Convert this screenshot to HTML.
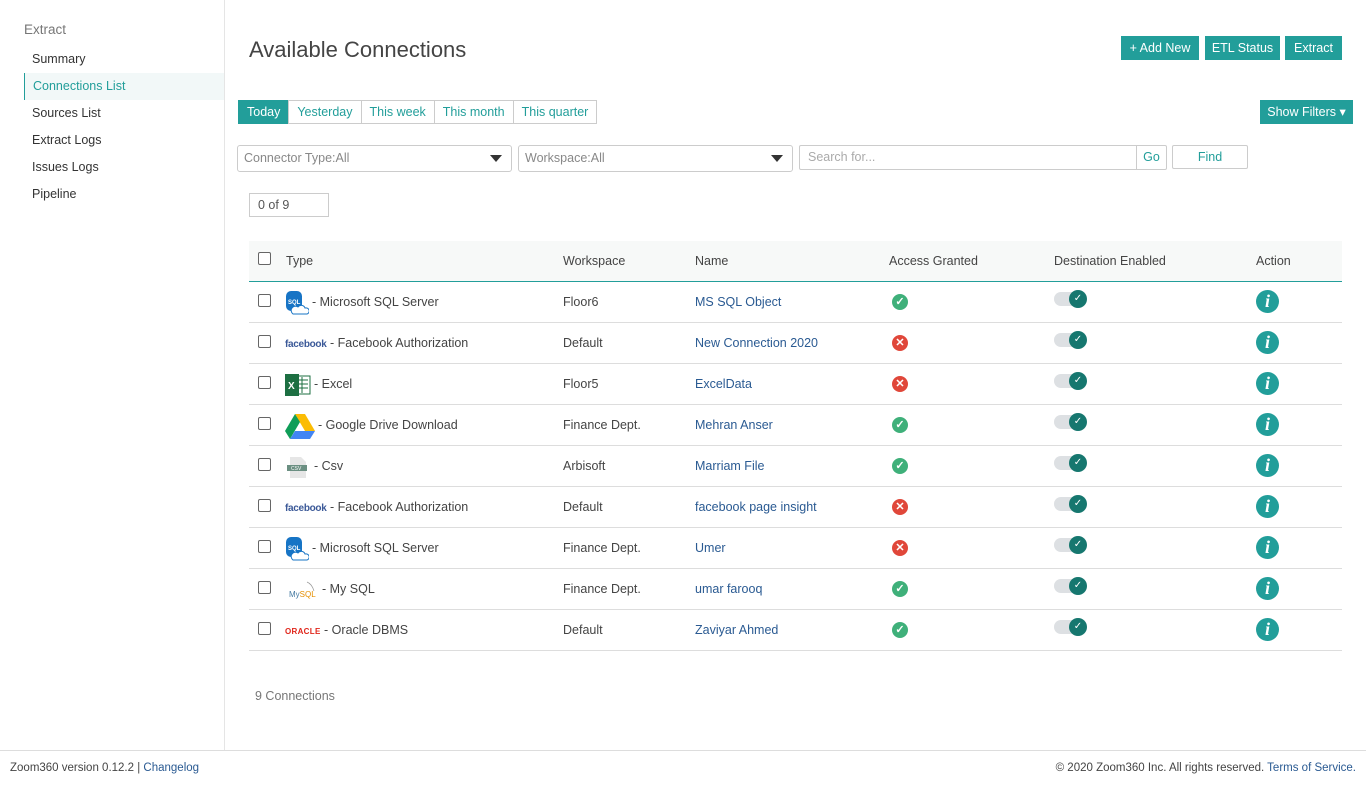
<!DOCTYPE html>
<html><head><meta charset="utf-8"><style>
*{box-sizing:border-box;margin:0;padding:0}
body{width:1366px;height:786px;font-family:"Liberation Sans",sans-serif;font-size:12.5px;color:#444;background:#fff;position:relative;overflow:hidden}
.abs{position:absolute}
.side{left:0;top:0;width:225px;height:750px;border-right:1px solid #e5e5e5}
.side .h{position:absolute;left:24px;top:22px;font-size:13.5px;color:#777}
.side .it{position:absolute;left:24px;width:200px;height:27px;line-height:27px;padding-left:8px;color:#333}
.side .act{background:#f2f8f8;border-left:1px solid #229e9a;color:#229e9a}
h1{position:absolute;left:249px;top:37px;font-size:22px;font-weight:normal;color:#444}
.btn{position:absolute;background:#229e9a;color:#fff;height:24px;line-height:24px;text-align:center;font-size:12.5px}
.tabs{position:absolute;left:238px;top:100px;display:flex}
.tabs div{height:24px;line-height:22px;border:1px solid #ccc;margin-right:-1px;padding:0 8px;color:#229e9a;background:#fff}
.tabs .on{background:#229e9a;color:#fff;border-color:#229e9a}
.sel{position:absolute;top:145px;height:27px;border:1px solid #ccc;border-radius:3px;line-height:25px;padding-left:6px;color:#888}
.sel:after{content:"";position:absolute;right:9px;top:9px;border:6px solid transparent;border-top:7px solid #333}
.th{left:249px;top:241px;width:1093px;height:41px;background:#f7f9f8;border-bottom:1px solid #229e9a}
.row{left:249px;width:1093px;height:41px;border-bottom:1px solid #ddd}
.c{position:absolute;top:0;line-height:40px;white-space:nowrap}
.cb{position:absolute;left:9px;top:12px;width:13px;height:13px;border:1px solid #666;border-radius:2px;background:#fff}
.lnk{color:#2a5a92}
.ok,.no{position:absolute;left:643px;top:12px;width:16px;height:16px;border-radius:50%;color:#fff;font-size:11px;line-height:16px;text-align:center;font-weight:bold}
.ok{background:#3fb07a}.no{background:#e0473a}
.tg{position:absolute;left:805px;top:10px;width:32px;height:14px;border-radius:7px;background:#dde0e3}
.tg:after{content:"✓";position:absolute;right:-1px;top:-2px;width:18px;height:18px;border-radius:50%;background:#16776f;color:#fff;font-size:10px;line-height:18px;text-align:center}
.inf{position:absolute;left:1007px;top:8px;width:23px;height:23px;border-radius:50%;background:#229e9a;color:#fff;font-family:"Liberation Serif",serif;font-style:italic;font-weight:bold;font-size:18px;line-height:23px;text-align:center}
.ic{display:inline-block;vertical-align:middle;margin-right:3px}
.fb{color:#3b5998;font-weight:bold;font-size:10px;letter-spacing:-.3px}
.or{color:#e0261b;font-weight:bold;font-size:8px;letter-spacing:.3px}
</style></head><body>
<div class="abs side">
<div class="h">Extract</div>
<div class="it" style="top:46px">Summary</div>
<div class="it act" style="top:73px">Connections List</div>
<div class="it" style="top:100px">Sources List</div>
<div class="it" style="top:127px">Extract Logs</div>
<div class="it" style="top:154px">Issues Logs</div>
<div class="it" style="top:181px">Pipeline</div>
</div>
<h1>Available Connections</h1>
<div class="btn" style="left:1121px;top:36px;width:78px">+ Add New</div>
<div class="btn" style="left:1205px;top:36px;width:75px">ETL Status</div>
<div class="btn" style="left:1285px;top:36px;width:57px">Extract</div>
<div class="btn" style="left:1260px;top:100px;width:93px">Show Filters ▾</div>
<div class="tabs"><div class="on">Today</div><div>Yesterday</div><div>This week</div><div>This month</div><div>This quarter</div></div>
<div class="sel" style="left:237px;width:275px">Connector Type:All</div>
<div class="sel" style="left:518px;width:275px">Workspace:All</div>
<div class="abs" style="left:799px;top:145px;width:368px;height:25px;border:1px solid #ccc;border-radius:2px;color:#aaa;line-height:23px;padding-left:8px">Search for...<span style="position:absolute;right:0;top:0;width:30px;height:23px;border-left:1px solid #ccc;color:#229e9a;text-align:center">Go</span></div>
<div class="abs" style="left:1172px;top:145px;width:76px;height:24px;border:1px solid #ccc;border-radius:2px;color:#229e9a;text-align:center;line-height:22px">Find</div>
<div class="abs" style="left:249px;top:193px;width:80px;height:24px;border:1px solid #ccc;line-height:22px;padding-left:8px;color:#555">0 of 9</div>
<div class="abs th">
<div class="cb" style="top:11px"></div>
<div class="c" style="left:37px">Type</div><div class="c" style="left:314px">Workspace</div><div class="c" style="left:446px">Name</div><div class="c" style="left:640px">Access Granted</div><div class="c" style="left:805px">Destination Enabled</div><div class="c" style="left:1007px">Action</div>
</div>

<div class="abs row" style="top:282px"><div class="cb"></div><div class="c" style="left:36px"><svg class="ic" width="24" height="26"><rect x="1" y="1" width="16" height="20" rx="5" fill="#1774c5"/><text x="3" y="14" font-size="6" fill="#fff" font-weight="bold">SQL</text><path d="M8 24h14a3 3 0 0 0-2-6 4 4 0 0 0-7-1 3 3 0 0 0-5 7z" fill="#fff" stroke="#1774c5"/></svg>- Microsoft SQL Server</div><div class="c" style="left:314px">Floor6</div><div class="c lnk" style="left:446px">MS SQL Object</div><div class="ok">✓</div><div class="tg"></div><div class="inf">i</div></div>
<div class="abs row" style="top:323px"><div class="cb"></div><div class="c" style="left:36px"><span class="fb">facebook</span> - Facebook Authorization</div><div class="c" style="left:314px">Default</div><div class="c lnk" style="left:446px">New Connection 2020</div><div class="no">✕</div><div class="tg"></div><div class="inf">i</div></div>
<div class="abs row" style="top:364px"><div class="cb"></div><div class="c" style="left:36px"><svg class="ic" width="26" height="24"><rect x="9" y="3" width="16" height="18" fill="#fff" stroke="#1d6f42"/><path d="M13 7h10M13 11h10M13 15h10M17 4v16" stroke="#1d6f42"/><rect x="0" y="1" width="14" height="22" fill="#1d6f42"/><text x="3" y="16" font-size="10" fill="#fff" font-weight="bold">X</text></svg>- Excel</div><div class="c" style="left:314px">Floor5</div><div class="c lnk" style="left:446px">ExcelData</div><div class="no">✕</div><div class="tg"></div><div class="inf">i</div></div>
<div class="abs row" style="top:405px"><div class="cb"></div><div class="c" style="left:36px"><svg class="ic" width="30" height="26"><path d="M10 1h10l10 17h-10z" fill="#fbbc04"/><path d="M10 1l-10 17 5 8 10-17z" fill="#0f9d58"/><path d="M5 26h20l5-8H10z" fill="#4285f4"/></svg>- Google Drive Download</div><div class="c" style="left:314px">Finance Dept.</div><div class="c lnk" style="left:446px">Mehran Anser</div><div class="ok">✓</div><div class="tg"></div><div class="inf">i</div></div>
<div class="abs row" style="top:446px"><div class="cb"></div><div class="c" style="left:36px"><svg class="ic" width="26" height="24"><path d="M5 2h11l5 5v16H5z" fill="#e6e6e6"/><rect x="2" y="10" width="20" height="6" fill="#6b8f82"/><text x="6" y="15" font-size="5" fill="#fff">CSV</text></svg>- Csv</div><div class="c" style="left:314px">Arbisoft</div><div class="c lnk" style="left:446px">Marriam File</div><div class="ok">✓</div><div class="tg"></div><div class="inf">i</div></div>
<div class="abs row" style="top:487px"><div class="cb"></div><div class="c" style="left:36px"><span class="fb">facebook</span> - Facebook Authorization</div><div class="c" style="left:314px">Default</div><div class="c lnk" style="left:446px">facebook page insight</div><div class="no">✕</div><div class="tg"></div><div class="inf">i</div></div>
<div class="abs row" style="top:528px"><div class="cb"></div><div class="c" style="left:36px"><svg class="ic" width="24" height="26"><rect x="1" y="1" width="16" height="20" rx="5" fill="#1774c5"/><text x="3" y="14" font-size="6" fill="#fff" font-weight="bold">SQL</text><path d="M8 24h14a3 3 0 0 0-2-6 4 4 0 0 0-7-1 3 3 0 0 0-5 7z" fill="#fff" stroke="#1774c5"/></svg>- Microsoft SQL Server</div><div class="c" style="left:314px">Finance Dept.</div><div class="c lnk" style="left:446px">Umer</div><div class="no">✕</div><div class="tg"></div><div class="inf">i</div></div>
<div class="abs row" style="top:569px"><div class="cb"></div><div class="c" style="left:40px"><svg class="ic" width="30" height="22"><text x="0" y="18" font-size="8" fill="#4479a1">My<tspan fill="#e48e00">SQL</tspan></text><path d="M18 3q5 2 7 9" stroke="#999" fill="none" stroke-width=".7"/></svg>- My SQL</div><div class="c" style="left:314px">Finance Dept.</div><div class="c lnk" style="left:446px">umar farooq</div><div class="ok">✓</div><div class="tg"></div><div class="inf">i</div></div>
<div class="abs row" style="top:610px"><div class="cb"></div><div class="c" style="left:36px"><span class="or">ORACLE</span> - Oracle DBMS</div><div class="c" style="left:314px">Default</div><div class="c lnk" style="left:446px">Zaviyar Ahmed</div><div class="ok">✓</div><div class="tg"></div><div class="inf">i</div></div>

<div class="abs" style="left:255px;top:689px;color:#777">9 Connections</div>
<div class="abs" style="left:0;top:750px;width:1366px;border-top:1px solid #ddd"></div>
<div class="abs" style="left:10px;top:762px;font-size:11.5px;color:#444">Zoom360 version 0.12.2 | <span style="color:#2a5a92">Changelog</span></div>
<div class="abs" style="right:10px;top:762px;font-size:11.5px;color:#444">© 2020 Zoom360 Inc. All rights reserved. <span style="color:#2a5a92">Terms of Service.</span></div>
</body></html>
